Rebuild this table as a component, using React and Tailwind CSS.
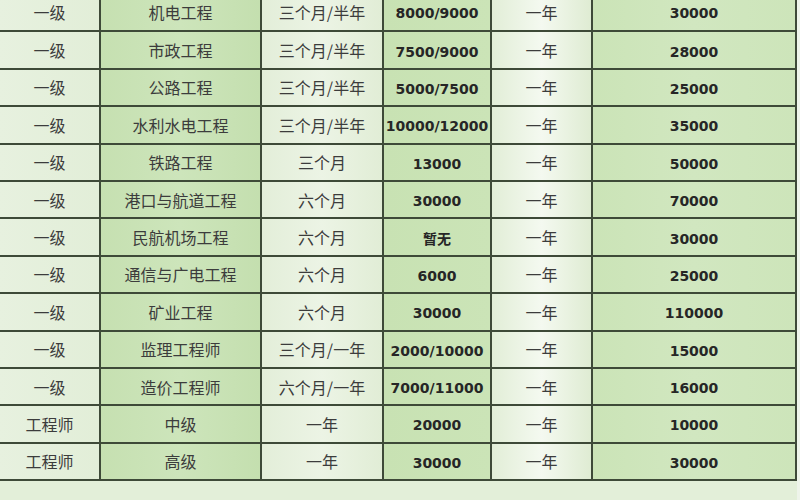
import React from 'react';

const rows = [
  ['一级', '机电工程', '三个月/半年', '8000/9000', '一年', '30000'],
  ['一级', '市政工程', '三个月/半年', '7500/9000', '一年', '28000'],
  ['一级', '公路工程', '三个月/半年', '5000/7500', '一年', '25000'],
  ['一级', '水利水电工程', '三个月/半年', '10000/12000', '一年', '35000'],
  ['一级', '铁路工程', '三个月', '13000', '一年', '50000'],
  ['一级', '港口与航道工程', '六个月', '30000', '一年', '70000'],
  ['一级', '民航机场工程', '六个月', '暂无', '一年', '30000'],
  ['一级', '通信与广电工程', '六个月', '6000', '一年', '25000'],
  ['一级', '矿业工程', '六个月', '30000', '一年', '110000'],
  ['一级', '监理工程师', '三个月/一年', '2000/10000', '一年', '15000'],
  ['一级', '造价工程师', '六个月/一年', '7000/11000', '一年', '16000'],
  ['工程师', '中级', '一年', '20000', '一年', '10000'],
  ['工程师', '高级', '一年', '30000', '一年', '30000'],
];

// background per column, left to right
const colBg = [
  'bg-linear-to-r from-[#e7f1df] to-[#e2eed8]',
  'bg-linear-to-r from-[#c6e0b1] via-[#cde5bb] to-[#c4dfaf]',
  'bg-linear-to-r from-[#e3eed9] via-[#ecf4e5] to-[#e1edd6]',
  'bg-linear-to-r from-[#c8e2b3] to-[#cbe4b7]',
  'bg-linear-to-r from-[#e2eed7] via-[#f4f9f0] to-[#dfecd3]',
  'bg-linear-to-r from-[#cbe4b7] via-[#d1e7c0] to-[#cde5ba]',
];

const cjk = "font-['Noto_Sans_CJK_SC',sans-serif] text-[16px] text-[#3c3c3c]";
const num = "pt-[4px] font-['DejaVu_Sans','Noto_Sans_CJK_SC',sans-serif] font-bold text-[14px] text-[#262626]";

export default function App() {
  return (
    <div className="w-[800px] h-[500px] overflow-hidden bg-[#e3efd9] flex">
      <div className="w-[797px] -mt-[7px]">
        <div className="grid grid-cols-[101px_161px_122px_108px_101px_204px] border-b-2 border-[#3e4a38]">
          {rows.map((row, ri) =>
            row.map((cell, ci) => (
              <div
                key={ri + '-' + ci}
                className={
                  'h-[37.4px] flex items-center justify-center border-r-2 border-[#3e4a38] ' +
                  (ri > 0 ? 'border-t-2 ' : '') +
                  colBg[ci] +
                  ' ' +
                  (ci === 3 || ci === 5 ? num : cjk)
                }
              >
                {cell}
              </div>
            ))
          )}
        </div>
      </div>
      <div className="flex-1 bg-[#eef4ea]"></div>
    </div>
  );
}
